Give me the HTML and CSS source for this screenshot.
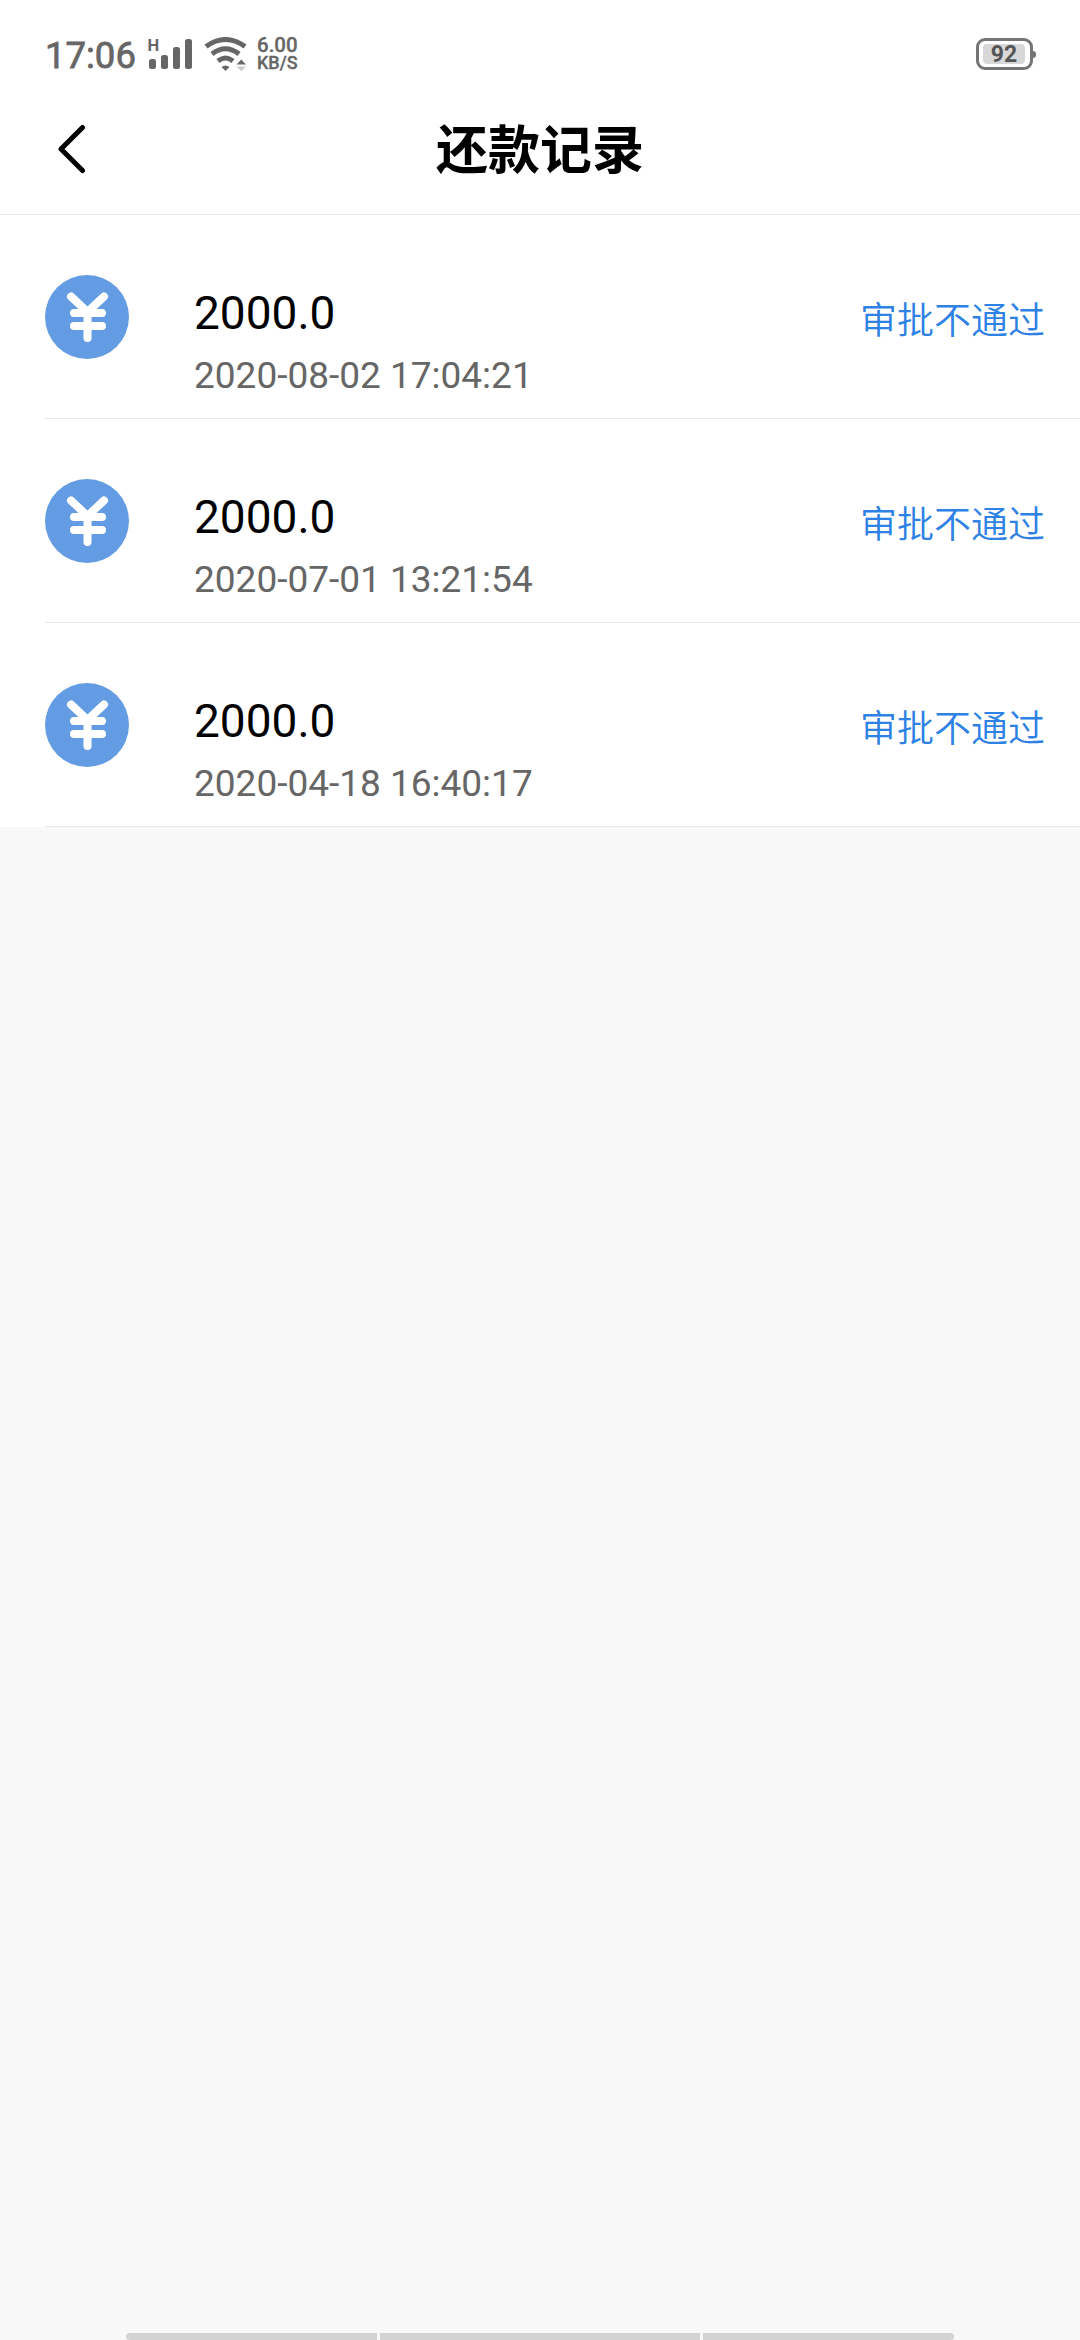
FILE: index.html
```html
<!DOCTYPE html>
<html lang="zh-CN">

<head>
    <meta charset="UTF-8">
    <meta name="viewport" content="width=device-width, initial-scale=1.0">
    <link rel="stylesheet" href="styles.css">
    <title>还款记录</title>
</head>

<body>
    <div class="status-bar">
        <span class="time">17:06</span>
        <svg class="signal" width="46" height="34" viewBox="0 0 46 34">
            <text class="signal-type" x="-0.5" y="14.5">H</text>
            <rect x="1" y="23" width="7" height="10" rx="2.5" />
            <rect x="13" y="19" width="7" height="14" rx="2.5" />
            <rect x="25" y="11" width="7" height="22" rx="2.5" />
            <rect x="37" y="3" width="7" height="30" rx="2.5" />
        </svg>
        <svg class="wifi" width="44" height="34" viewBox="0 0 44 34">
            <path class="wave" d="M2 9.5Q21.5 -4.5 41 9.5" />
            <path class="wave" d="M8 17Q21.5 6.5 35 17" />
            <path class="wave" d="M14 24Q21.5 18 29 24" />
            <path d="M17.5 30Q21.5 27 25.5 30L21.5 34Z" />
            <path d="M32.500 27.500h9.500l-4.700-5z" />
            <path class="down" d="M32.500 29.500h9.500l-4.700 5z" />
        </svg>
        <div class="speed">
            <span class="speed-value">6.00</span>
            <span class="speed-unit">KB/S</span>
        </div>
        <div class="battery">
            <div class="battery-level">92</div>
        </div>
        <div class="battery-tip"></div>
    </div>
    <div class="header">
        <a class="back" href="#">
            <svg width="32" height="54" viewBox="0 0 32 54">
                <path d="M28.500 5.500L7 27L28.500 48.500" />
            </svg>
        </a>
        <h1 class="title">还款记录</h1>
    </div>
    <div class="list">
        <div class="item">
            <svg class="icon" width="84" height="84" viewBox="0 0 84 84">
                <circle cx="42" cy="42" r="42" />
                <path d="M26 21.500L42.500 37L59 21.500M29 38H57M29 51H57M42.500 37V63" />
            </svg>
            <div class="info">
                <div class="amount">2000.0</div>
                <div class="date">2020-08-02 17:04:21</div>
            </div>
            <div class="state">审批不通过</div>
        </div>
        <div class="item">
            <svg class="icon" width="84" height="84" viewBox="0 0 84 84">
                <circle cx="42" cy="42" r="42" />
                <path d="M26 21.500L42.500 37L59 21.500M29 38H57M29 51H57M42.500 37V63" />
            </svg>
            <div class="info">
                <div class="amount">2000.0</div>
                <div class="date">2020-07-01 13:21:54</div>
            </div>
            <div class="state">审批不通过</div>
        </div>
        <div class="item">
            <svg class="icon" width="84" height="84" viewBox="0 0 84 84">
                <circle cx="42" cy="42" r="42" />
                <path d="M26 21.500L42.500 37L59 21.500M29 38H57M29 51H57M42.500 37V63" />
            </svg>
            <div class="info">
                <div class="amount">2000.0</div>
                <div class="date">2020-04-18 16:40:17</div>
            </div>
            <div class="state">审批不通过</div>
        </div>
    </div>
    <div class="gesture-bar">
        <div class="side left"></div>
        <div class="middle"></div>
        <div class="side right"></div>
    </div>
</body>

</html>
```
FILE: styles.css
```css
* {
    box-sizing: border-box;
}

body {
    margin: 0;
    height: 2340px;
    display: flex;
    flex-direction: column;
    background: #f8f8f8;
    font-family: Roboto, "Noto Sans CJK SC", sans-serif;
    overflow: hidden;
}

.status-bar {
    display: flex;
    align-items: center;
    height: 108px;
    padding: 0 44px 0 45px;
    background: #fff;
    color: #666;
}

.time {
    width: 103px;
    font-size: 36.5px;
    font-weight: 400;
    -webkit-text-stroke: 0.8px #666;
    line-height: 42px;
    padding-top: 3px;
}

.signal,
.wifi {
    fill: #666;
    margin-bottom: 2px;
}

.signal-type {
    font-size: 16.5px;
    font-weight: 700;
}

.wifi {
    margin-left: 10px;
    margin-bottom: 0;
}

.wave {
    fill: none;
    stroke: #666;
    stroke-width: 5;
}

.down {
    fill: #ccc;
}

.speed {
    display: flex;
    flex-direction: column;
    margin-left: 9px;
    font-weight: 500;
    -webkit-text-stroke: 0.3px #666;
}

.speed-value {
    font-size: 20.5px;
    line-height: 17px;
}

.speed-unit {
    font-size: 18px;
    line-height: 17px;
}

.battery {
    width: 57px;
    height: 32px;
    margin-left: auto;
    padding: 3px;
    border: 3px solid #757575;
    border-radius: 9px;
}

.battery-level {
    height: 20px;
    width: 42px;
    margin-left: 1px;
    border-radius: 4px;
    background: #d8d8d8;
    color: #555;
    font-size: 23px;
    font-weight: 700;
    line-height: 21px;
    text-align: center;
}

.battery-tip {
    width: 3px;
    height: 7px;
    border-radius: 0 3px 3px 0;
    background: #757575;
}

.header {
    display: flex;
    align-items: center;
    height: 107px;
    padding: 0 54px;
    border-bottom: 1px solid #e6e6e6;
    background: #fff;
}

.back {
    display: flex;
    width: 32px;
    padding-bottom: 24px;
}

.back path {
    fill: none;
    stroke: #000;
    stroke-width: 5;
    stroke-linecap: round;
    stroke-linejoin: round;
}

.title {
    flex: 1;
    margin: 0 32px 0 0;
    padding-bottom: 18px;
    color: #000;
    font-size: 52px;
    font-weight: 700;
    line-height: 76px;
    text-align: center;
}

.list {
    padding-left: 45px;
    background: #fff;
}

.item {
    display: flex;
    align-items: flex-start;
    height: 204px;
    padding: 60px 35px 0 0;
    border-bottom: 1px solid #e6e6e6;
}

.icon circle {
    fill: #649ce3;
}

.icon path {
    fill: none;
    stroke: #fff;
    stroke-width: 8;
    stroke-linecap: round;
    stroke-linejoin: round;
}

.info {
    flex: 1;
    margin-left: 65px;
}

.amount {
    padding-top: 11px;
    color: #000;
    font-size: 46px;
    line-height: 54px;
}

.date {
    padding-top: 14px;
    color: #666;
    font-size: 37px;
    line-height: 44px;
}

.state {
    padding-top: 20px;
    color: #2e82e5;
    font-size: 37px;
    font-weight: 350;
    line-height: 54px;
}

/* system navigation strip */
.gesture-bar {
    display: flex;
    justify-content: center;
    gap: 3px;
    height: 7px;
    margin-top: auto;
}

.side {
    width: 251px;
    background: #d3d3d3;
}

.middle {
    width: 320px;
    background: #d3d3d3;
}

.left {
    border-radius: 4px 0 0 4px;
}

.right {
    border-radius: 0 4px 4px 0;
}
```
